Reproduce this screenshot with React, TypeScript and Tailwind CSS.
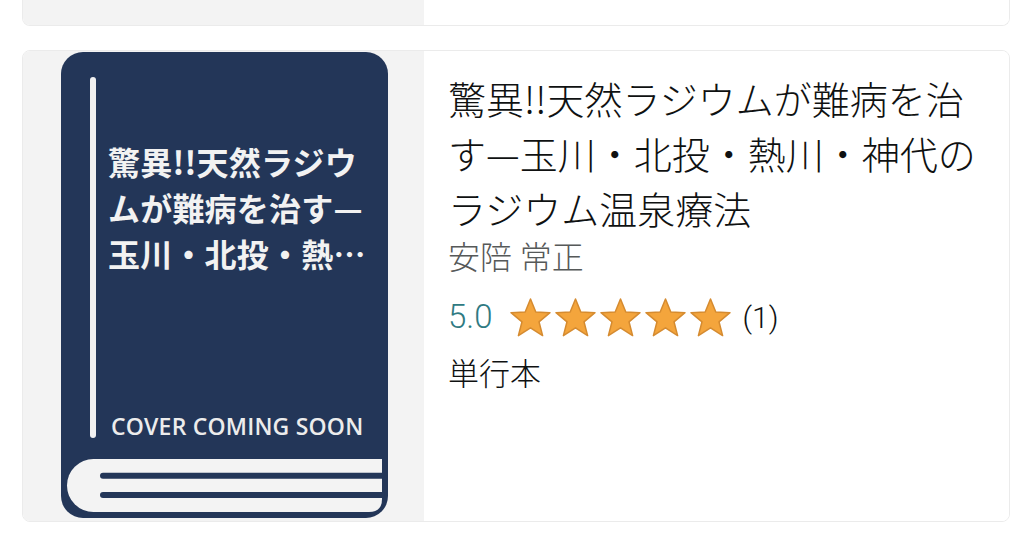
import React from "react";

const Star = () => (
  <svg width="41" height="39" viewBox="0 0 41 39" className="shrink-0">
    <polygon
      points="20.5,1 25.8,14 40,14.7 29,23.8 32.6,37.6 20.5,29.8 8.4,37.6 12,23.8 1,14.7 15.2,14"
      fill="#f4a53c"
      stroke="#d58b30"
      strokeWidth="1.5"
      strokeLinejoin="round"
    />
  </svg>
);

const cjk = { fontFamily: "'Noto Sans CJK JP', sans-serif" };

// placeholder book cover, drawn shapes + real text
const Cover = () => (
  <div className="w-[327px] h-[466px] bg-[#233658] rounded-[22px] flex flex-col pt-[25px]">
    <div className="flex h-[361px]">
      <div className="ml-[29px] w-[6px] h-full rounded-full bg-[#f1f1f1]" />
      <div className="ml-[12px] flex flex-col justify-between">
        <div className="mt-[61px] text-[32px] leading-[46px] font-bold text-[#f2f2f2] tracking-[0.2px]" style={cjk}>
          <div>驚異!!天然ラジウ</div>
          <div>ムが難病を治す—</div>
          <div>玉川・北投・熱…</div>
        </div>
        <div
          className="ml-[3px] text-[23px] leading-[24px] font-semibold text-[#ececec] whitespace-nowrap tracking-[0.2px]"
          style={{ fontFamily: "'Open Sans', sans-serif" }}
        >
          COVER COMING SOON
        </div>
      </div>
    </div>
    <svg width="327" height="59" viewBox="0 0 327 59" className="mt-[21px]">
      <path d="M32.5 0 H321 V40 Q321 53 308 53 H32.5 A26.5 26.5 0 0 1 32.5 0 Z" fill="#f3f3f3" />
      <path d="M42 16.7 H321" stroke="#233658" strokeWidth="6" strokeLinecap="round" />
      <path d="M42 36 H321" stroke="#233658" strokeWidth="6" strokeLinecap="round" />
    </svg>
  </div>
);

const App = () => {
  return (
    <div
      className="w-[1024px] h-[545px] bg-white overflow-hidden flex flex-col"
      style={{ fontFamily: "Roboto, 'Noto Sans CJK JP', sans-serif" }}
    >
      {/* tail of the previous result card */}
      <div className="ml-[22px] w-[988px] h-[26px] flex rounded-b-[8px] border border-t-0 border-[#ebebeb] overflow-hidden">
        <div className="w-[401px] bg-[#f3f3f3]" />
        <div className="flex-1 bg-white" />
      </div>

      <div className="ml-[22px] mt-[24px] w-[988px] h-[472px] flex rounded-[8px] border border-[#ebebeb] overflow-hidden">
        <div className="w-[401px] bg-[#f3f3f3] pl-[38px] pt-[1px]">
          <Cover />
        </div>
        <div className="flex-1 bg-white pl-[24px] pt-[19px]">
          <div className="text-[38px] leading-[55px] font-light text-[#0f1111] w-[545px]" style={cjk}>
            驚異!!天然ラジウムが難病を治す—玉川・北投・熱川・神代のラジウム温泉療法
          </div>
          <div className="text-[32px] leading-[46px] font-light text-[#565959]">安陪 常正</div>
          <div className="mt-[16px] flex items-center h-[40px]">
            <span className="text-[33px] font-light text-[#2f7a82] mr-[17px]">5.0</span>
            <div className="flex gap-[4px]">
              <Star />
              <Star />
              <Star />
              <Star />
              <Star />
            </div>
            <span className="ml-[12px] text-[30px] font-light text-[#0f1111]">(1)</span>
          </div>
          <div className="mt-[16px] text-[31px] leading-[44px] font-light text-[#0f1111]">単行本</div>
        </div>
      </div>
    </div>
  );
};

export default App;
